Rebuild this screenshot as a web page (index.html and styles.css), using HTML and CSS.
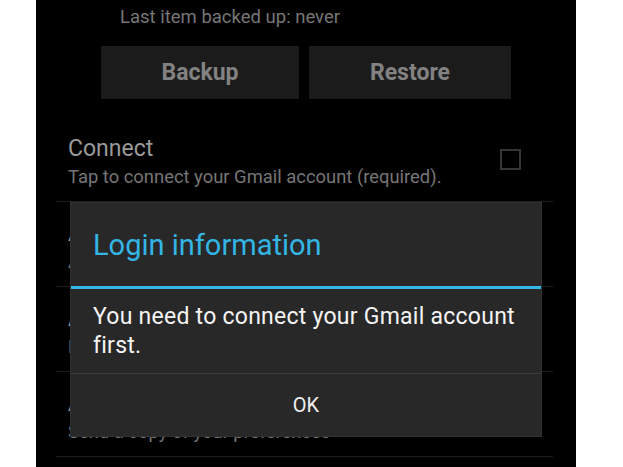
FILE: index.html
```html
<!DOCTYPE html>
<html lang="en">
  <head>
    <meta charset="UTF-8" />
    <meta name="viewport" content="width=device-width, initial-scale=1.0" />
    <title>SMS Backup</title>
    <link rel="stylesheet" href="styles.css">
  </head>
  <body>
    <section class="screen">
      <div class="backup-status">Last item backed up: never</div>
      <div class="backup-actions">
        <button type="button" class="action-button backup">Backup</button>
        <button type="button" class="action-button restore">Restore</button>
      </div>

      <ul class="pref-list">
        <li class="pref">
          <div class="pref-text">
            <div class="pref-title">Connect</div>
            <div class="pref-summary">Tap to connect your Gmail account (required).</div>
          </div>
          <span class="pref-checkbox"></span>
        </li>
        <li class="pref">
          <div class="pref-text">
            <div class="pref-title">Auto backup</div>
            <div class="pref-summary">Automatically back up new messages</div>
          </div>
        </li>
        <li class="pref">
          <div class="pref-text">
            <div class="pref-title">Advanced settings</div>
            <div class="pref-summary">Labels, folders and filters</div>
          </div>
        </li>
        <li class="pref">
          <div class="pref-text">
            <div class="pref-title">About</div>
            <div class="pref-summary">Send a copy of your preferences</div>
          </div>
        </li>
      </ul>

      <div class="dialog">
        <header class="dialog-title">Login information</header>
        <div class="dialog-body">You need to connect your Gmail account first.</div>
        <button type="button" class="dialog-button">OK</button>
      </div>
    </section>
  </body>
</html>
```

FILE: styles.css
```css
html {
  box-sizing: border-box;
  font-family: Roboto, 'Liberation Sans', sans-serif;
}
*,
*::after,
*::before {
  box-sizing: inherit;
}

body {
  margin: 0;
  background-color: #fff;
  height: 467px;
  overflow: hidden;
}

.screen {
  position: relative;
  margin-left: 36px;
  width: 540px;
  height: 467px;
  background-color: #000;
  overflow: hidden;
}

.backup-status {
  padding-top: 6px;
  padding-left: 84px;
  font-size: 18.5px;
  line-height: 22px;
  color: #767676;
}

.backup-actions {
  display: flex;
  gap: 10px;
  margin-top: 18px;
  padding-left: 65px;
}

.action-button {
  height: 53px;
  border: none;
  background-color: #1b1b1b;
  color: #828282;
  font-family: inherit;
  font-size: 23px;
  font-weight: bold;
  cursor: pointer;
}

.action-button.backup {
  width: 198px;
}

.action-button.restore {
  width: 202px;
}

.pref-list {
  list-style: none;
  margin: 18px 0 0 0;
  padding: 0;
}

.pref {
  display: flex;
  align-items: center;
  height: 85px;
  margin: 0 23px 0 20px;
  padding-left: 12px;
  border-bottom: 1px solid #1d1d1d;
}

.pref-text {
  flex: 1;
  padding-top: 4px;
}

.pref-title {
  font-size: 23px;
  line-height: 28px;
  color: #9a9a9a;
}

.pref-summary {
  margin-top: 3px;
  font-size: 18.4px;
  line-height: 22px;
  color: #767676;
}

.pref-checkbox {
  width: 21px;
  height: 21px;
  margin-right: 32px;
  border: 2px solid #363636;
}

/* modal sits over the preference list */
.dialog {
  position: absolute;
  left: 35px;
  top: 203px;
  width: 470px;
  display: flex;
  flex-direction: column;
  background-color: #282828;
  box-shadow: 0 0 0 1px #313131;
}

.dialog-title {
  padding: 25px 22px 24px;
  font-size: 29px;
  line-height: 34px;
  color: #33b5e5;
  border-bottom: 3px solid #33b5e5;
}

.dialog-body {
  padding: 13px 22px;
  font-size: 23px;
  line-height: 29px;
  letter-spacing: 0.25px;
  color: #f4f4f4;
  border-bottom: 1px solid #3d3d3d;
}

.dialog-button {
  height: 62px;
  border: none;
  background-color: transparent;
  color: #efefef;
  font-family: inherit;
  font-size: 20px;
  cursor: pointer;
}
```
